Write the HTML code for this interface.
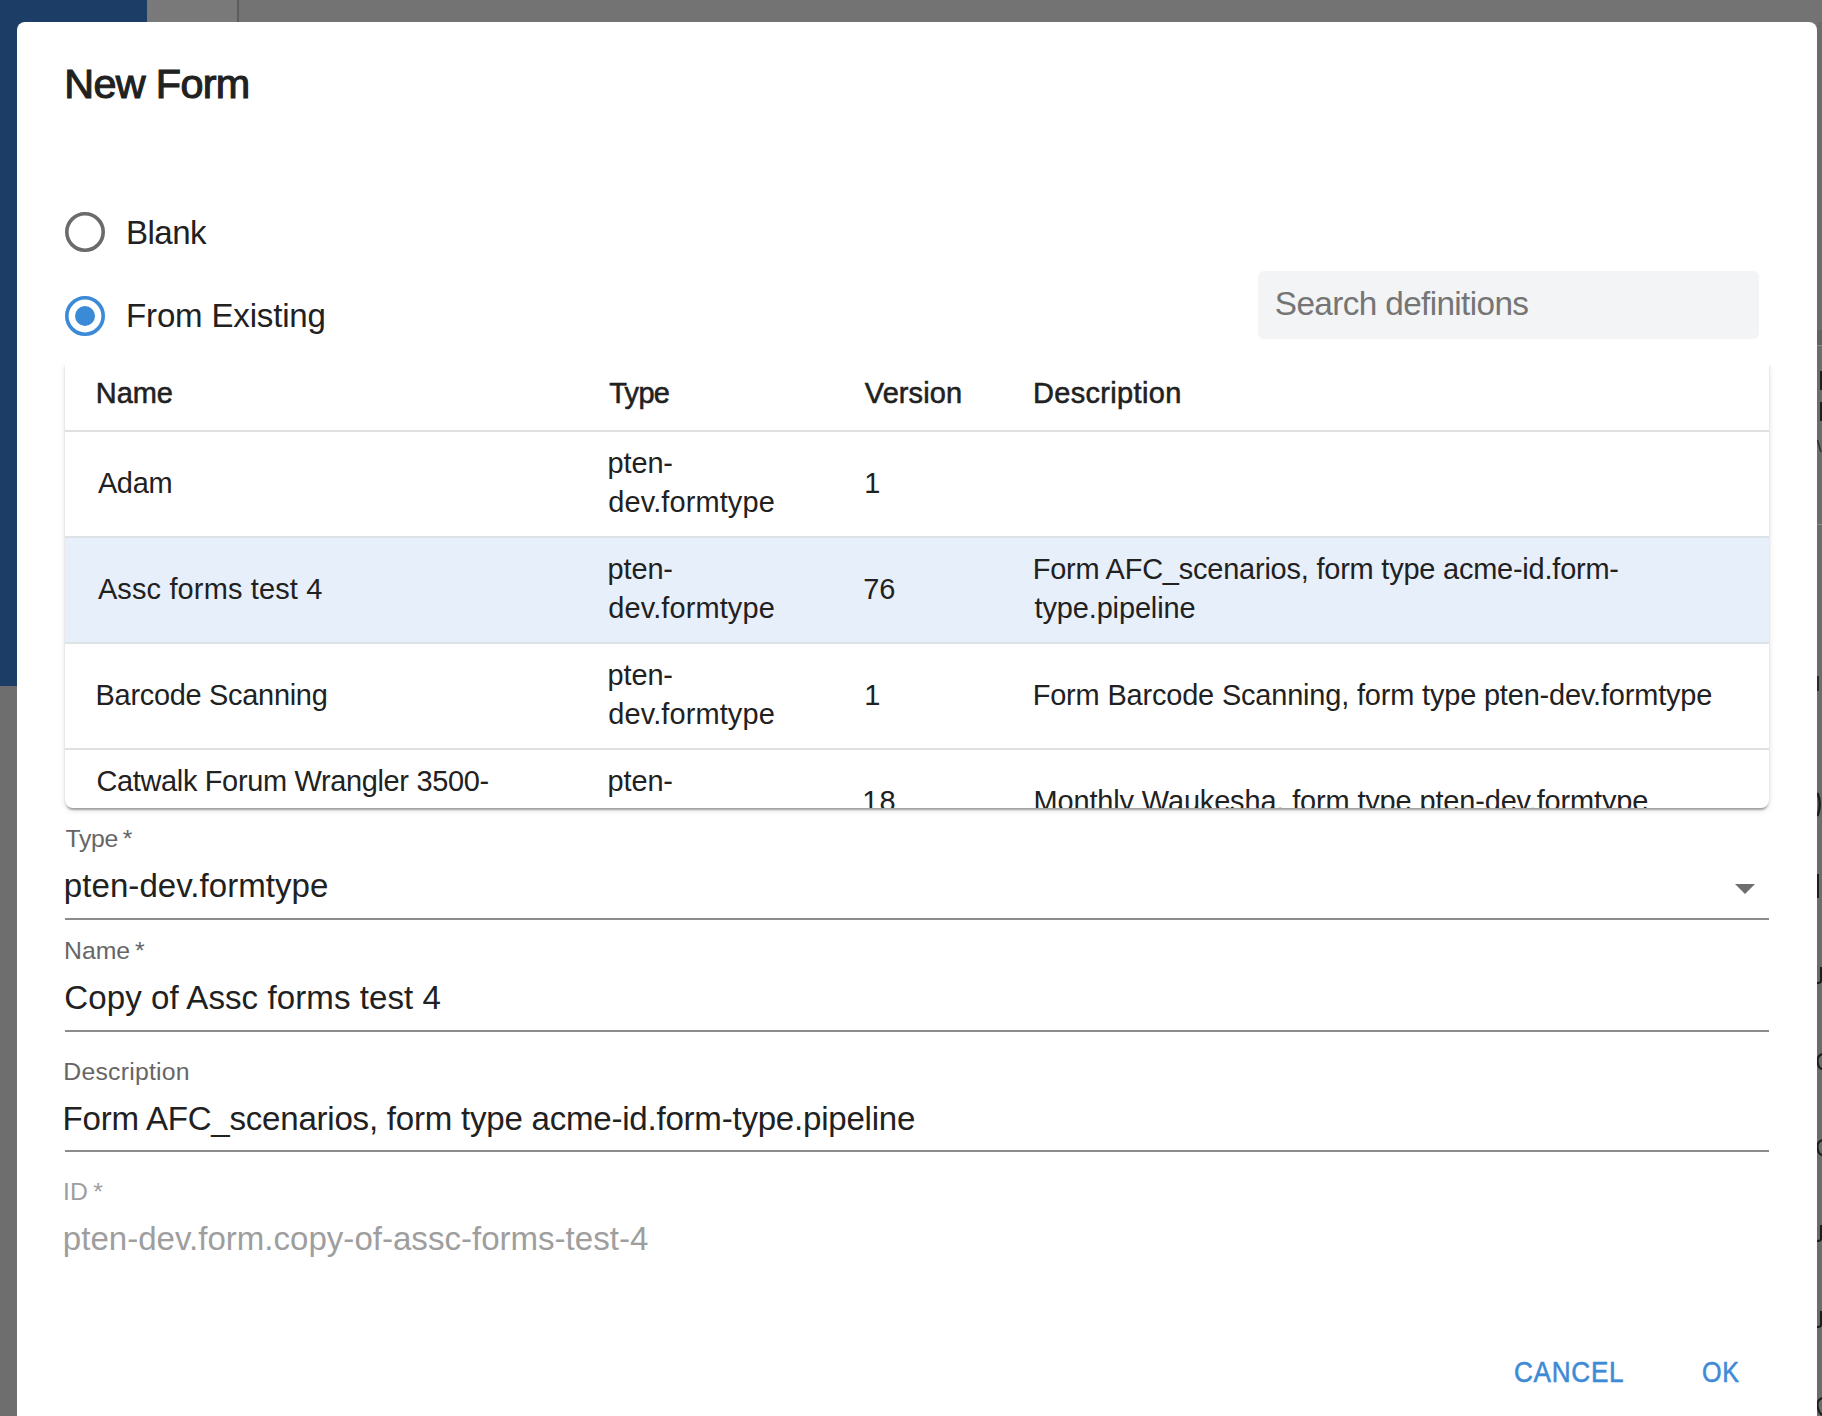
<!DOCTYPE html>
<html><head><meta charset="utf-8"><title>New Form</title>
<style>
html,body{margin:0;padding:0;width:1822px;height:1416px;overflow:hidden;font-family:"Liberation Sans", sans-serif;}
body{position:relative;background:#747474;}
.t{position:absolute;line-height:1;white-space:nowrap;}
.r{position:absolute;}
</style></head><body>
<div class="r" style="left:0px;top:0px;width:1822px;height:1416px;background:#737373"></div>
<div class="r" style="left:0px;top:686px;width:17px;height:730px;background:#6e6e6e"></div>
<div class="r" style="left:147px;top:0px;width:90px;height:22px;background:#797979"></div>
<div class="r" style="left:0px;top:0px;width:147px;height:686px;background:#1b3d66"></div>
<div class="r" style="left:237px;top:0px;width:2px;height:22px;background:#5c5c5c"></div>
<div class="r" style="left:1817px;top:22px;width:5px;height:1394px;background:#6c6c6c"></div>
<div class="r" style="left:1817px;top:330px;width:5px;height:15px;background:#626262"></div>
<div class="r" style="left:1817px;top:345px;width:5px;height:1px;background:#8a8a8a"></div>
<div class="r" style="left:1817px;top:524px;width:5px;height:1px;background:#8a8a8a"></div>
<div class="r" style="left:1820px;top:371px;width:2px;height:19px;background:#1e1e1e"></div>
<div class="r" style="left:1820px;top:402px;width:2px;height:19px;background:#1e1e1e"></div>
<svg class="r" style="left:1817px;top:440px" width="5" height="13"><path d="M0.5 0 L4 12" stroke="#333" stroke-width="1.6"/></svg>
<div class="r" style="left:1817px;top:676px;width:2px;height:15px;background:#2a2a2a"></div>
<svg class="r" style="left:1817px;top:792px" width="5" height="25"><path d="M0.5 1 Q5 12 0.5 24" fill="none" stroke="#1e1e1e" stroke-width="2.5"/></svg>
<div class="r" style="left:1817px;top:874px;width:2px;height:24px;background:#1e1e1e"></div>
<svg class="r" style="left:1817px;top:967px" width="5" height="17"><path d="M4 0 L4 14 Q4 16 0 16" fill="none" stroke="#1e1e1e" stroke-width="2.2"/></svg>
<svg class="r" style="left:1817px;top:1225px" width="5" height="17"><path d="M4 0 L4 14 Q4 16 0 16" fill="none" stroke="#1e1e1e" stroke-width="2.2"/></svg>
<svg class="r" style="left:1817px;top:1311px" width="5" height="17"><path d="M4 0 L4 14 Q4 16 0 16" fill="none" stroke="#1e1e1e" stroke-width="2.2"/></svg>
<svg class="r" style="left:1817px;top:1053px" width="5" height="17"><path d="M5 1 Q0 3 0.5 8 Q1 15 5 16" fill="none" stroke="#1e1e1e" stroke-width="2.2"/></svg>
<svg class="r" style="left:1817px;top:1139px" width="5" height="17"><path d="M5 1 Q0 3 0.5 8 Q1 15 5 16" fill="none" stroke="#1e1e1e" stroke-width="2.2"/></svg>
<svg class="r" style="left:1817px;top:1397px" width="5" height="19"><path d="M5 1 Q0 3 0.5 8 Q1 15 5 18" fill="none" stroke="#1e1e1e" stroke-width="2.2"/></svg>
<div class="r" style="left:17px;top:22px;width:1800px;height:1440px;background:#fff;border-radius:8px"></div>
<div class="t" style="left:64.34px;top:64.40px;font-size:41.34px;color:#212121;letter-spacing:-0.668px;-webkit-text-stroke:1.1px #212121;">New Form</div>
<svg class="r" style="left:65px;top:212px" width="40" height="40"><circle cx="20" cy="20" r="18.2" fill="none" stroke="#6b6b6b" stroke-width="3.6"/></svg>
<svg class="r" style="left:65px;top:296px" width="40" height="40"><circle cx="20" cy="20" r="18.2" fill="none" stroke="#3b8ad8" stroke-width="3.6"/><circle cx="20" cy="20" r="10" fill="#3b8ad8"/></svg>
<div class="t" style="left:126.05px;top:215.50px;font-size:33.07px;color:#212121;letter-spacing:-0.557px;">Blank</div>
<div class="t" style="left:126.05px;top:298.70px;font-size:33.07px;color:#212121;letter-spacing:-0.188px;">From Existing</div>
<div class="r" style="left:1258px;top:271px;width:501px;height:68px;background:#f2f4f6;border-radius:6px"></div>
<div class="t" style="left:1274.80px;top:286.96px;font-size:33.35px;color:#757575;letter-spacing:-0.633px;">Search definitions</div>
<div class="r" style="left:45px;top:364px;width:1745px;height:470px;overflow:hidden"><div class="r" style="left:20px;top:0px;width:1704px;height:444px;background:#fff;border-radius:0 0 8px 8px;box-shadow:0 4px 2px -2px rgba(0,0,0,0.2),0 2px 2px 0 rgba(0,0,0,0.14),0 2px 6px 0 rgba(0,0,0,0.12);overflow:hidden"><div class="r" style="left:0px;top:66px;width:1704px;height:2px;background:#e0e0e0"></div><div class="r" style="left:0px;top:173px;width:1704px;height:106px;background:#e7effa"></div><div class="r" style="left:0px;top:172px;width:1704px;height:2px;background:#dde2e7"></div><div class="r" style="left:0px;top:278px;width:1704px;height:2px;background:#dde2e7"></div><div class="r" style="left:0px;top:384px;width:1704px;height:2px;background:#e0e0e0"></div><div class="t" style="left:30.86px;top:14.60px;font-size:28.94px;color:#212121;letter-spacing:-0.083px;-webkit-text-stroke:0.55px #212121;">Name</div><div class="t" style="left:544.20px;top:14.60px;font-size:28.94px;color:#212121;letter-spacing:-0.672px;-webkit-text-stroke:0.55px #212121;">Type</div><div class="t" style="left:799.83px;top:14.60px;font-size:28.94px;color:#212121;letter-spacing:0.112px;-webkit-text-stroke:0.55px #212121;">Version</div><div class="t" style="left:968.06px;top:14.60px;font-size:28.94px;color:#212121;letter-spacing:0.347px;-webkit-text-stroke:0.55px #212121;">Description</div><div class="t" style="left:32.90px;top:104.60px;font-size:28.94px;color:#212121;letter-spacing:-0.329px;">Adam</div><div class="t" style="left:542.62px;top:84.50px;font-size:28.94px;color:#212121;letter-spacing:-0.148px;">pten-</div><div class="t" style="left:543.34px;top:124.00px;font-size:28.94px;color:#212121;letter-spacing:0.116px;">dev.formtype</div><div class="t" style="left:542.62px;top:190.50px;font-size:28.94px;color:#212121;letter-spacing:-0.148px;">pten-</div><div class="t" style="left:543.34px;top:230.00px;font-size:28.94px;color:#212121;letter-spacing:0.116px;">dev.formtype</div><div class="t" style="left:542.62px;top:296.50px;font-size:28.94px;color:#212121;letter-spacing:-0.148px;">pten-</div><div class="t" style="left:543.34px;top:336.00px;font-size:28.94px;color:#212121;letter-spacing:0.116px;">dev.formtype</div><div class="t" style="left:799.33px;top:104.50px;font-size:28.94px;color:#212121;letter-spacing:0.300px;">1</div><div class="t" style="left:32.90px;top:210.80px;font-size:28.94px;color:#212121;letter-spacing:0.155px;">Assc forms test 4</div><div class="t" style="left:798.35px;top:210.50px;font-size:28.94px;color:#212121;letter-spacing:-0.115px;">76</div><div class="t" style="left:967.69px;top:190.50px;font-size:28.94px;color:#212121;letter-spacing:-0.206px;">Form AFC_scenarios, form type acme-id.form-</div><div class="t" style="left:969.57px;top:230.00px;font-size:28.94px;color:#212121;letter-spacing:-0.128px;">type.pipeline</div><div class="t" style="left:30.59px;top:316.90px;font-size:28.94px;color:#212121;letter-spacing:-0.287px;">Barcode Scanning</div><div class="t" style="left:799.33px;top:316.90px;font-size:28.94px;color:#212121;letter-spacing:0.300px;">1</div><div class="t" style="left:967.69px;top:316.90px;font-size:28.94px;color:#212121;letter-spacing:-0.167px;">Form Barcode Scanning, form type pten-dev.formtype</div><div class="t" style="left:31.45px;top:402.50px;font-size:28.94px;color:#212121;letter-spacing:-0.329px;">Catwalk Forum Wrangler 3500-</div><div class="t" style="left:542.62px;top:402.50px;font-size:28.94px;color:#212121;letter-spacing:-0.148px;">pten-</div><div class="t" style="left:797.33px;top:422.50px;font-size:28.94px;color:#212121;letter-spacing:1.009px;">18</div><div class="t" style="left:968.59px;top:422.50px;font-size:28.94px;color:#212121;letter-spacing:-0.139px;">Monthly Waukesha, form type pten-dev.formtype</div></div></div>
<div class="t" style="left:65.50px;top:827.00px;font-size:24.80px;color:#666666;letter-spacing:-0.297px;">Type *</div>
<div class="t" style="left:63.85px;top:869.00px;font-size:33.07px;color:#212121;letter-spacing:0.036px;">pten-dev.formtype</div>
<div class="r" style="left:65px;top:918px;width:1704px;height:2px;background:#8c8c8c"></div>
<svg class="r" style="left:1735px;top:884px" width="20" height="10"><path d="M0 0 L20 0 L10 10 Z" fill="#6e6e6e"/></svg>
<div class="t" style="left:64.02px;top:939.00px;font-size:24.80px;color:#666666;letter-spacing:-0.040px;">Name *</div>
<div class="t" style="left:64.35px;top:981.30px;font-size:33.07px;color:#212121;letter-spacing:0.075px;">Copy of Assc forms test 4</div>
<div class="r" style="left:65px;top:1030px;width:1704px;height:2px;background:#8c8c8c"></div>
<div class="t" style="left:63.32px;top:1060.00px;font-size:24.80px;color:#666666;letter-spacing:0.228px;">Description</div>
<div class="t" style="left:62.55px;top:1102.10px;font-size:33.07px;color:#212121;letter-spacing:-0.230px;">Form AFC_scenarios, form type acme-id.form-type.pipeline</div>
<div class="r" style="left:65px;top:1150px;width:1704px;height:2px;background:#8c8c8c"></div>
<div class="t" style="left:63.07px;top:1179.50px;font-size:24.80px;color:#9e9e9e;letter-spacing:0.156px;">ID *</div>
<div class="t" style="left:62.85px;top:1222.00px;font-size:33.07px;color:#9e9e9e;letter-spacing:-0.001px;">pten-dev.form.copy-of-assc-forms-test-4</div>
<div class="t" style="left:1514.34px;top:1357.50px;font-size:28.94px;color:#3d8ad6;letter-spacing:0.800px;-webkit-text-stroke:0.55px #3d8ad6;transform:scaleX(0.9032);transform-origin:0 0;">CANCEL</div>
<div class="t" style="left:1702.01px;top:1357.50px;font-size:28.94px;color:#3d8ad6;letter-spacing:0.800px;-webkit-text-stroke:0.55px #3d8ad6;transform:scaleX(0.8684);transform-origin:0 0;">OK</div>
</body></html>
